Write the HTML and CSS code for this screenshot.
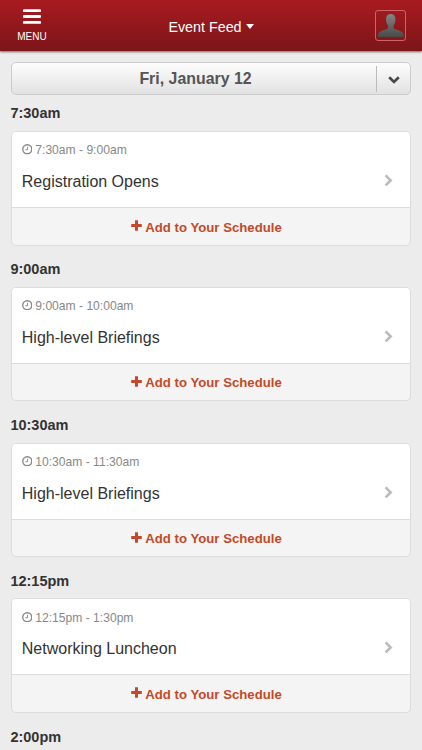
FILE: index.html
```html
<!DOCTYPE html>
<html lang="en">
<head>
<meta charset="utf-8">
<title>Event Feed</title>
<link rel="stylesheet" href="styles.css">
</head>
<body>
<svg width="0" height="0" class="defs" aria-hidden="true">
  <symbol id="clock" viewBox="0 0 10 10"><circle cx="5" cy="5" r="4.3" fill="none" stroke="currentColor" stroke-width="1.3"/><path d="M5.3 2.6V5.5H3.2" fill="none" stroke="currentColor" stroke-width=".9"/></symbol>
  <symbol id="plus" viewBox="0 0 11 11"><path d="M5.5 .2V10.8M.2 5.5H10.8" stroke="currentColor" stroke-width="3"/></symbol>
  <symbol id="chevron" viewBox="0 0 9 13"><path d="M1.6 1.4L6.6 6.4L1.6 11.4" fill="none" stroke="currentColor" stroke-width="2.7"/></symbol>
</svg>
<header class="topbar">
  <div class="menu">
    <svg class="bars" viewBox="0 0 18 16"><path d="M1.2 1.7H16.8M1.2 7.5H16.8M1.2 13.3H16.8" stroke="#fff" stroke-width="2.8" stroke-linecap="round"/></svg>
    <span>MENU</span>
  </div>
  <div class="title">Event Feed <i class="caret"></i></div>
  <div class="avatar">
    <svg viewBox="0 0 28 28"><defs><linearGradient id="person" x1="0" y1="0" x2="0" y2="1"><stop offset="0" stop-color="#858483"/><stop offset="1" stop-color="#494b49"/></linearGradient></defs><path fill="url(#person)" d="M14.2 3C11.2 3 9.6 5.1 9.7 8.5C9.8 11 10.6 12.5 11.5 13.8V16.3C11.1 17.7 7.5 18 4.6 19.5C2.5 20.7 1.7 22.5 1.5 25H27C26.8 22.5 26 20.7 24 19.5C21.3 18 17.4 17.7 17 16.3V13.8C18 12.5 18.7 11 18.8 8.5C18.9 5.1 17.2 3 14.2 3Z"/></svg>
  </div>
</header>
<main>
  <div class="datebar">
    <span class="date">Fri, January 12</span>
    <span class="drop"><svg viewBox="0 0 12 8"><path d="M1.2 1.2L6 5.9L10.8 1.2" fill="none" stroke="#484848" stroke-width="2.7"/></svg></span>
  </div>
  <section class="slot">
    <h2>7:30am</h2>
    <article class="card">
      <div class="info">
        <div class="time"><svg><use href="#clock"/></svg>7:30am - 9:00am</div>
        <div class="name">Registration Opens<svg><use href="#chevron"/></svg></div>
      </div>
      <div class="add"><svg><use href="#plus"/></svg>Add to Your Schedule</div>
    </article>
  </section>
  <section class="slot">
    <h2>9:00am</h2>
    <article class="card">
      <div class="info">
        <div class="time"><svg><use href="#clock"/></svg>9:00am - 10:00am</div>
        <div class="name">High-level Briefings<svg><use href="#chevron"/></svg></div>
      </div>
      <div class="add"><svg><use href="#plus"/></svg>Add to Your Schedule</div>
    </article>
  </section>
  <section class="slot">
    <h2>10:30am</h2>
    <article class="card">
      <div class="info">
        <div class="time"><svg><use href="#clock"/></svg>10:30am - 11:30am</div>
        <div class="name">High-level Briefings<svg><use href="#chevron"/></svg></div>
      </div>
      <div class="add"><svg><use href="#plus"/></svg>Add to Your Schedule</div>
    </article>
  </section>
  <section class="slot">
    <h2>12:15pm</h2>
    <article class="card">
      <div class="info">
        <div class="time"><svg><use href="#clock"/></svg>12:15pm - 1:30pm</div>
        <div class="name">Networking Luncheon<svg><use href="#chevron"/></svg></div>
      </div>
      <div class="add"><svg><use href="#plus"/></svg>Add to Your Schedule</div>
    </article>
  </section>
  <section class="slot last">
    <h2>2:00pm</h2>
  </section>
</main>
</body>
</html>
```
FILE: styles.css
```css
* { box-sizing: border-box; }
body {
  margin: 0;
  height: 750px;
  overflow: hidden;
  background: #ececec;
  color: #333;
  font-family: "Liberation Sans", Arial, sans-serif;
}
svg { display: block; }
.defs { position: absolute; }
.topbar {
  height: 51px;
  display: grid;
  grid-template-columns: 64px 1fr 64px;
  background: linear-gradient(#a81b20, #7c1519);
  box-shadow: 0 1px 2px rgba(60, 0, 0, .6);
  color: #fff;
}
.menu {
  display: flex;
  flex-direction: column;
  align-items: center;
  padding-top: 9px;
  font-size: 10px;
  line-height: 12px;
}
.bars { width: 18px; height: 16px; margin-bottom: 6px; }
.title {
  display: flex;
  justify-content: center;
  align-items: center;
  gap: 4px;
  padding-top: 3px;
  font-size: 14.3px;
}
.caret {
  border: 4.5px solid transparent;
  border-top: 5px solid #fff;
  border-bottom: 0;
  margin-top: -2px;
}
.avatar {
  width: 31px;
  height: 31px;
  margin: 10px 0 0 17px;
  border: 1px solid #c66;
  border-radius: 3px;
}
.avatar svg { width: 29px; height: 29px; }
main { padding: 11px 11px 0; }
.datebar {
  height: 33px;
  display: flex;
  align-items: center;
  border: 1px solid #ccc;
  border-radius: 5px;
  background: linear-gradient(#fdfdfd, #e2e2e2);
  color: #555;
}
.date { flex: 1; padding-left: 3px; text-align: center; font-size: 15.9px; font-weight: bold; }
.drop {
  width: 34px;
  height: 26px;
  border-left: 1px solid #bbb;
  display: flex;
  justify-content: center;
  align-items: center;
}
.drop svg { width: 12px; height: 8px; margin-top: 2px; }
.slot { height: 155.8px; }
.last { height: 60px; }
h2 {
  margin: 0 0 0 -.6px;
  height: 36px;
  padding-top: 9.4px;
  font-size: 14.5px;
  line-height: 18px;
}
.card {
  height: 114.5px;
  border: 1px solid #dcdcdc;
  border-radius: 5px;
  background: #f4f4f4;
  overflow: hidden;
}
.info {
  height: 76px;
  padding: 9.4px 10.5px 0 9.8px;
  background: #fff;
  border-bottom: 1px solid #dcdcdc;
}
.time {
  display: flex;
  align-items: center;
  gap: 3px;
  color: #888;
  font-size: 12.1px;
  line-height: 18px;
}
.time svg { width: 10.5px; height: 10.5px; margin-top: -2px; }
.name {
  display: flex;
  justify-content: space-between;
  align-items: center;
  margin-top: 12.6px;
  font-size: 16px;
  line-height: 20px;
}
.name svg { width: 9px; height: 13px; margin: -3px 7px 0 0; color: #bbb; }
.add {
  height: 37px;
  display: flex;
  justify-content: center;
  align-items: center;
  gap: 3px;
  padding: 1px 9px 0 0;
  color: #c24a2a;
  font-size: 13.2px;
  font-weight: bold;
}
.add svg { width: 11px; height: 11px; margin-top: -3px; }
```
